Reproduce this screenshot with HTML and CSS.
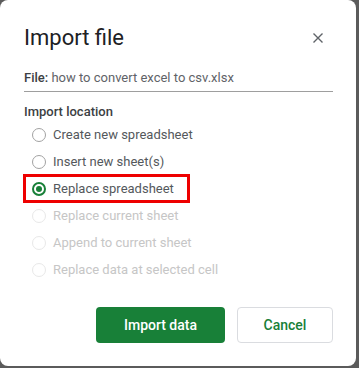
FILE: index.html
```html
<!DOCTYPE html>
<html lang="en">
<head>
    <meta charset="UTF-8">
    <title>Import file</title>
    <link rel="stylesheet" href="styles.css">
</head>
<body>
    <div class="dialog">
        <div class="dialog-header">
            <h2>Import file</h2>
            <button class="close-button" aria-label="Close">
                <svg width="10" height="10" viewBox="0 0 10 10">
                    <path d="M0.5 0.5L9.5 9.5M9.5 0.5L0.5 9.5" stroke="#5f6368" stroke-width="1.4" fill="none"/>
                </svg>
            </button>
        </div>
        <div class="file-name"><b>File:</b> how to convert excel to csv.xlsx</div>

        <div class="section-label">Import location</div>
        <div class="options">
            <label class="option"><span class="radio"></span>Create new spreadsheet</label>
            <label class="option"><span class="radio"></span>Insert new sheet(s)</label>
            <label class="option marked"><span class="radio checked"></span>Replace spreadsheet</label>
            <label class="option disabled"><span class="radio"></span>Replace current sheet</label>
            <label class="option disabled"><span class="radio"></span>Append to current sheet</label>
            <label class="option disabled"><span class="radio"></span>Replace data at selected cell</label>
        </div>

        <div class="actions">
            <button class="primary-button">Import data</button>
            <button class="secondary-button">Cancel</button>
        </div>
    </div>
</body>
</html>
```
FILE: styles.css
```css
body {
    margin: 0;
    width: 359px;
    height: 368px;
    background: #5b5b5b;
    font-family: Roboto, 'Noto Sans', sans-serif;
    color: #3c4043;
    overflow: hidden;
}

.dialog {
    width: 356px;
    height: 366px;
    box-sizing: border-box;
    background: white;
    border-radius: 8px;
    padding: 24px 23px 23px 24px;
}

.dialog-header {
    display: flex;
    align-items: center;
    justify-content: space-between;
    height: 28px;
    margin-bottom: 16px;
}
.dialog-header h2 {
    margin: 0;
    font-size: 22px;
    line-height: 28px;
    font-weight: 400;
    color: #202124;
}
.close-button {
    border: none;
    background: none;
    padding: 0;
    margin-right: 10px;
    width: 10px;
    height: 10px;
    display: flex;
}

.file-name {
    font-size: 13px;
    line-height: 20px;
    padding-bottom: 3px;
    border-bottom: 1px solid #9e9e9e;
    color: #5f6368;
}
.file-name b {
    font-weight: 500;
    color: #3c4043;
}

.section-label {
    margin-top: 11px;
    font-size: 13px;
    line-height: 18px;
    font-weight: 500;
    color: #3c4043;
}

.options {
    display: flex;
    flex-direction: column;
}
.option {
    display: flex;
    align-items: center;
    gap: 7px;
    height: 27px;
    padding-left: 8px;
    font-size: 13px;
    color: #54585c;
    position: relative;
}
.option.disabled {
    color: #c6c6c6;
}
.option.marked::after {
    content: '';
    position: absolute;
    left: -1px;
    top: -1px;
    width: 167px;
    height: 29px;
    box-sizing: border-box;
    border: 3px solid #ee0000;
}

.radio {
    width: 14px;
    height: 14px;
    box-sizing: border-box;
    border: 1.5px solid #a2a2a2;
    border-radius: 50%;
    flex-shrink: 0;
}
.option.disabled .radio {
    border-color: #e8e8e8;
}
.radio.checked {
    border: 2px solid #188038;
    display: flex;
    align-items: center;
    justify-content: center;
}
.radio.checked::before {
    content: '';
    width: 6px;
    height: 6px;
    border-radius: 50%;
    background: #188038;
}

.actions {
    display: flex;
    justify-content: flex-end;
    gap: 12px;
    margin-top: 24px;
}
.primary-button,
.secondary-button {
    height: 36px;
    border-radius: 4px;
    font-family: Roboto, 'Noto Sans', sans-serif;
    font-size: 14px;
    font-weight: 500;
    cursor: pointer;
}
.primary-button {
    width: 129px;
    background: #188038;
    color: white;
    border: none;
}
.secondary-button {
    width: 96px;
    background: white;
    color: #188038;
    border: 1px solid #dadce0;
}
```
